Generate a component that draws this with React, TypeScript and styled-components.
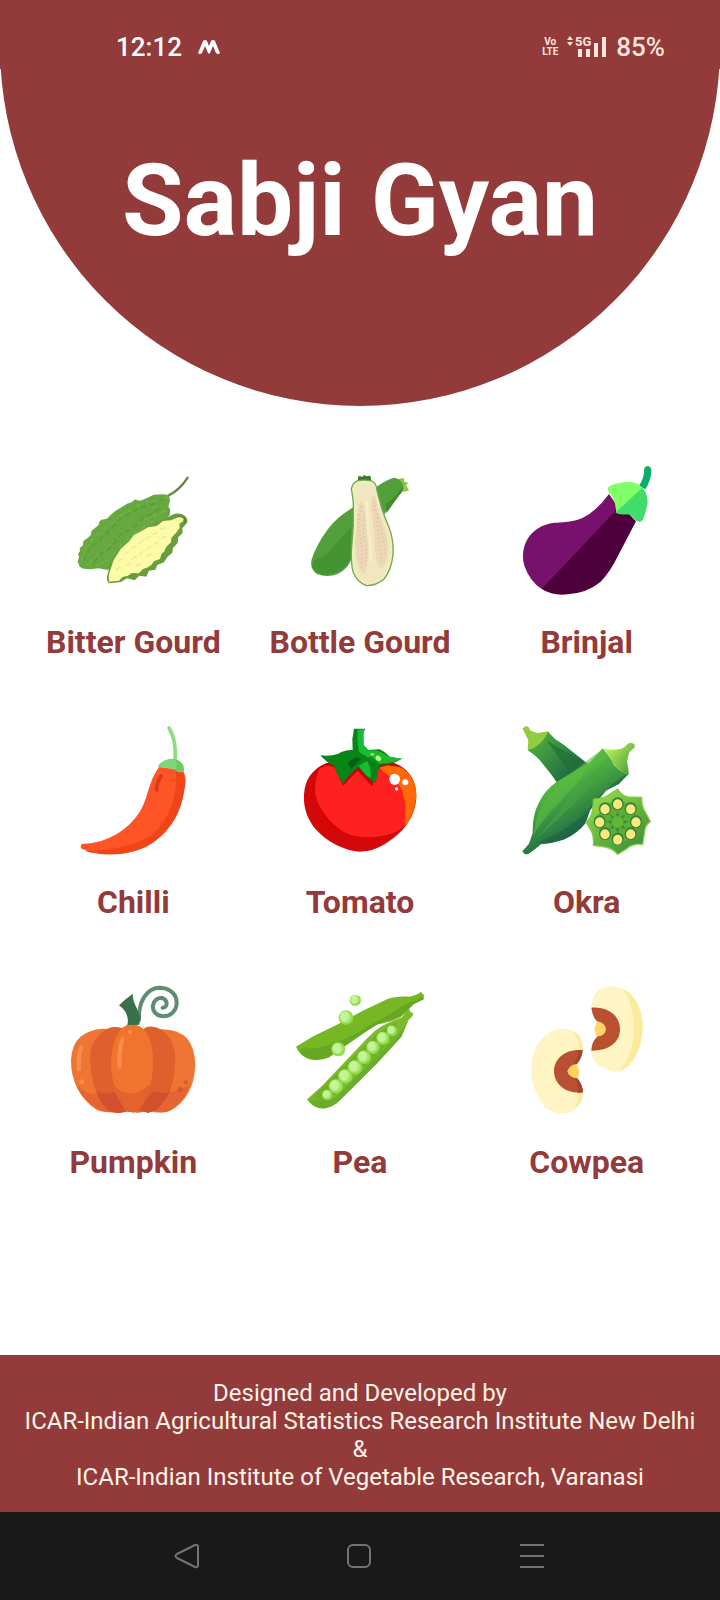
import React from "react";
import styled, { createGlobalStyle } from "styled-components";

const maroon = "#933a3a";
const paleText = "#ffe4de";

const GlobalStyle = createGlobalStyle`
  *, *::before, *::after { box-sizing: border-box; }
  body {
    margin: 0;
    background: #fff;
    font-family: Roboto, "Noto Sans", sans-serif;
  }
`;

const Screen = styled.div`
  display: flex;
  flex-direction: column;
  min-height: 100vh;
  background: #fff;
`;

const Header = styled.header`
  height: calc(50vw + 46px);
  border-radius: 0 0 50vw 50vw;
  background: ${maroon};
`;

const StatusBar = styled.div`
  display: flex;
  align-items: flex-end;
  justify-content: space-between;
  height: 69px;
  padding: 0 55px 7px 116px;
  background: ${maroon};
`;

const StatusGroup = styled.div<{ $gap: number; $color: string }>`
  display: flex;
  align-items: center;
  gap: ${(p) => p.$gap}px;
  color: ${(p) => p.$color};
`;

const StatusText = styled.span`
  font-size: 26px;
  font-weight: 500;
  line-height: 30px;
`;

const Volte = styled.span`
  display: flex;
  flex-direction: column;
  align-items: center;
  font-size: 10px;
  font-weight: 700;
  line-height: 10px;
`;

const Title = styled.h1`
  margin: 72px 0 0;
  color: #fff;
  font-size: 100px;
  font-weight: 700;
  line-height: 120px;
  text-align: center;
`;

const Grid = styled.main`
  display: grid;
  grid-template-columns: repeat(3, 1fr);
  flex: 1;
  align-content: start;
  padding: 60px 20px 0;
`;

const Tile = styled.button`
  display: flex;
  flex-direction: column;
  align-items: center;
  gap: 28px;
  height: 260px;
  padding: 0;
  border: 0;
  background: none;
  color: ${maroon};
  font: 700 32px/40px Roboto, "Noto Sans", sans-serif;
  white-space: nowrap;
  cursor: pointer;
`;

const Picture = styled.svg`
  display: block;
  width: 128px;
  height: 128px;
  overflow: visible;
`;

const Footer = styled.footer`
  padding: 24px 12px 21px;
  background: ${maroon};
  color: #fff3e8;
  font-size: 24px;
  line-height: 28px;
  text-align: center;

  p { margin: 0; }
`;

const NavBar = styled.nav`
  display: grid;
  grid-template-columns: repeat(3, 1fr);
  height: 88px;
  padding: 0 14%;
  background: #191919;
`;

const NavButton = styled.button`
  display: flex;
  align-items: center;
  justify-content: center;
  padding: 0;
  border: 0;
  background: none;
  color: #737373;
  cursor: pointer;
`;

const BitterGourd = () => (
  <Picture viewBox="28 18 384 384" aria-hidden="true">
    <path d="M328 106Q362 88 384 53" fill="none" stroke="#68843b" strokeWidth="7" strokeLinecap="round" />
    <path d="M328 105L310 103 282 104 270 110 248 120 238 122 226 118 216 127 202 131 187 141 170 151 155 163 142 176 126 179 119 184 117 195 103 206 95 214 94 224 83 235 71 243 70 256 60 264 61 273 55 281 58 291 54 305 60 320 71 326 92 328 117 325 144 330 260 250 330 165 332 150 326 138 331 124Z" fill="#67a940" />
    <path d="M325 110L285 125 255 124 222 147 191 161 166 183 145 194 130 216 105 226 90 250 78 266 66 300M320 153L269 170 223 196 198 219 165 239 136 270 111 286 82 316M282 182L225 220 182 259 142 301 112 319" fill="none" stroke="#80b84f" strokeWidth="6" strokeDasharray="12 6 4 8" opacity=".55" />
    <path d="M310 117L271 136 238 143 203 164 176 181 157 205 130 228 114 250 93 260 72 299M302 147L248 176 214 206 178 228 150 264 123 282 98 313" fill="none" stroke="#4f9a35" strokeWidth="7" strokeDasharray="18 9" opacity=".55" />
    <path d="M343 162Q366 157 379 171 386 180 381 190L368 205 369 219 356 231 354 249 340 264 338 278 324 290 313 307 293 315 287 329 268 332 260 350 239 347 225 361 202 355 184 366 151 370Q140 367 142 350L149 320 157 300 178 268 191 254 211 237 231 219 267 196 303 182Z" fill="#6a9d3d" />
    <path d="M364 169Q375 171 370 184L359 191 360 204 347 221 335 233 334 247 320 260 314 274 305 283 301 297 284 303 275 315 262 323 250 327 238 340 217 339 204 347 189 351 178 362 149 365Q144 349 153 327L162 300 183 267 209 243 222 226 244 214 265 202 291 198 310 183 334 181Z" fill="#fcfba8" />
    <path d="M303 207l14-4M280 223l14-5m11 18l13-7M258 237l13-8m13 25l11-9M237 251l13-10m12 27l11-8M214 267l13-10m13 26l12-9M194 284l12-9m11 23l12-8M176 303l13-7m12 20l12-7M263 289l12-8M230 318l12-7M170 328l11-7" stroke="#eceb8b" strokeWidth="4" strokeLinecap="round" />
    <path d="M356 169Q381 170 376 188" fill="none" stroke="#547f33" strokeWidth="4" />
  </Picture>
);

const BottleGourd = () => (
  <Picture viewBox="18 18 384 384" aria-hidden="true">
    <path d="M324 58L341 53 343 65 355 68 348 75 357 91 342 96 328 91Z" fill="#8bc64b" />
    <path d="M312 53Q332 55 339 74 340 95 328 105L286 159 185 294Q176 326 143 342 112 354 81 342 58 327 65 298 79 254 114 207 139 173 185 145L266 76Q290 59 312 53Z" fill="#529f3b" />
    <path d="M75 299Q114 290 134 253 160 224 183 203L184 295Q159 340 105 345 70 339 66 318Z" fill="#459433" />
    <path d="M286 132Q312 119 339 78 341 94 328 105L290 159Z" fill="#438a2e" />
    <path d="M203 62L205 48 218 50 222 45 230 49 241 47 244 62Z" fill="#397b2b" />
    <path d="M203 62Q222 58 246 63 260 71 260 88L271 130Q280 163 295 197 312 237 309 284 304 331 282 357 260 377 229 377 202 366 190 338 183 315 184 274L190 196 190 128Q186 95 184 87 187 69 203 62Z" fill="#eef0b8" stroke="#74a458" strokeWidth="4" />
    <path d="M205 71Q224 65 244 71 253 78 254 93L268 143Q279 177 289 199 303 234 300 280 296 322 276 348 255 366 228 367 207 357 197 334 190 310 193 274L198 199 197 127Q191 100 193 86Z" fill="#f0e6c0" />
    <path d="M212 122Q196 162 199 211 190 264 203 305 210 340 224 342 237 309 234 250L226 154Q222 128 212 122ZM245 108Q239 144 250 192 255 241 255 274 259 310 272 326 292 314 294 277 294 225 275 183 260 149 258 113Z" fill="#ecd8b7" />
    <path d="M214 140Q202 180 210 220T214 320M222 170Q216 210 225 250T224 310M253 125Q260 190 267 230T272 312M262 160Q272 200 280 240T285 290" fill="none" stroke="#d9bc9a" strokeWidth="5" strokeDasharray="4 8" opacity=".7" />
    <path d="M231 123Q230 196 242 245L243 308" fill="none" stroke="#f6ecca" strokeWidth="9" />
  </Picture>
);

const Brinjal = () => (
  <Picture viewBox="38 33 384 384" aria-hidden="true">
    <path d="M296 117Q258 169 215 190 178 204 132 203 78 210 52 251 30 289 42 332 58 378 94 402L235 300 337 176Z" fill="#78106d" />
    <path d="M318 165L94 402Q127 423 172 418 230 414 270 381 300 350 323 302L377 199 345 165Z" fill="#4e003b" />
    <path d="M401 45Q403 33 413 33 424 36 423 47 422 77 405 103L386 92Q402 69 401 45Z" fill="#0aae66" />
    <path d="M292 103Q291 96 300 92 331 79 360 81 382 83 396 98L361 151 317 174Q319 150 306 125 294 111 292 103Z" fill="#80ff68" />
    <path d="M396 98Q411 113 412 141 407 171 398 194 394 201 386 200L376 196Q365 181 352 178 331 181 315 173Z" fill="#41dc6b" />
  </Picture>
);

const Chilli = () => (
  <Picture viewBox="-2 33 384 384" aria-hidden="true">
    <path d="M269 155C246 186 240 214 229 248C215 294 185 330 140 358C100 380 70 386 40 386Q28 390 36 401C90 426 170 424 227 396C290 362 325 310 339 250C350 200 350 184 339 166Z" fill="#ff5426" />
    <path d="M317 158C326 215 310 290 264 344C210 394 120 405 45 408C110 426 190 417 240 389C290 360 325 310 339 250C350 200 350 184 335 164Z" fill="#f04419" />
    <path d="M275 183Q261 200 261 225" fill="none" stroke="#d83a20" strokeWidth="11" strokeLinecap="round" />
    <path d="M298 39Q321 75 316 137" fill="none" stroke="#8bdd80" strokeWidth="11" strokeLinecap="round" />
    <path d="M265 153Q278 134 303 131 329 131 341 150L344 169Q330 176 316 164 290 156 267 158Z" fill="#80d674" />
    <path d="M314 132Q339 137 343 167 330 173 316 163 328 149 314 132Z" fill="#6dca62" />
  </Picture>
);

const Tomato = () => (
  <Picture viewBox="18 33 384 384" aria-hidden="true">
    <path d="M95 151C135 130 180 140 211 142C255 132 300 135 324 149C362 168 379 200 379 243C378 300 345 345 305 373C275 396 245 410 210 410C165 409 110 380 77 343C50 310 40 275 42 239C45 195 65 168 95 151Z" fill="#d40607" />
    <path d="M89 161Q141 136 211 151 289 140 321 158C350 190 360 280 341 336C300 370 210 377 160 350C120 325 84 280 76 238Q72 196 89 161Z" fill="#ff2020" />
    <path d="M265 154Q308 145 336 159C365 178 379 205 379 243Q374 300 343 336C352 290 345 225 318 198Q285 177 265 154Z" fill="#ff6a05" />
    <path d="M103 148L133 157 159 213 203 167 246 214 267 158 291 151 337 157 288 134 141 133Z" fill="#b50d10" />
    <path d="M192 41H225L220 56 221 91 235 105 268 103Q290 112 305 134L337 130Q316 147 269 150L257 204Q227 188 206 156 181 173 159 205 141 182 132 151 113 146 91 121 121 125 145 116 164 104 188 105L187 73Z" fill="#078516" />
    <path d="M203 44L224 42 220 57 220 91Q233 108 255 119L236 128 207 111Q200 79 203 44ZM231 137Q245 160 242 188L229 181 206 153Z" fill="#16bd32" />
    <path d="M237 106Q270 103 291 123L335 131Q308 146 267 146L247 127Z" fill="#20b72d" />
    <path d="M173 142L199 127 213 132 183 163Z" fill="#075f15" />
    <ellipse cx="314" cy="193" rx="16" ry="17" fill="white" />
    <circle cx="346" cy="202" r="9" fill="white" />
    <circle cx="320" cy="222" r="5" fill="white" />
    <ellipse cx="265" cy="130" rx="9" ry="7" fill="#b4ff86" transform="rotate(35 265 130)" />
    <ellipse cx="247" cy="118" rx="6" ry="4" fill="#8eea64" />
    <path d="M112 344l9 9m17 4l17 18m2-8l-14 10" stroke="#a62116" strokeWidth="6" opacity=".6" />
  </Picture>
);

const okraSeeds: [number, number][] = [
  [322, 266], [361, 281], [377, 320], [361, 356],
  [322, 372], [284, 356], [268, 320], [284, 281],
];

const Okra = () => (
  <Picture viewBox="38 33 384 384" aria-hidden="true">
    <defs>
      <linearGradient id="okraBack" x1="80" y1="70" x2="220" y2="200" gradientUnits="userSpaceOnUse">
        <stop stopColor="#4aac3f" /><stop offset="1" stopColor="#155943" />
      </linearGradient>
      <linearGradient id="okraFront" x1="145" y1="205" x2="226" y2="340" gradientUnits="userSpaceOnUse">
        <stop stopColor="#54b93f" /><stop offset="1" stopColor="#1f6a45" />
      </linearGradient>
      <linearGradient id="okraCap" x1="290" y1="105" x2="360" y2="160" gradientUnits="userSpaceOnUse">
        <stop stopColor="#b7ec5b" /><stop offset="1" stopColor="#55a738" />
      </linearGradient>
      <linearGradient id="okraSlice" x1="250" y1="240" x2="390" y2="410" gradientUnits="userSpaceOnUse">
        <stop stopColor="#94dd49" /><stop offset="1" stopColor="#3b8e35" />
      </linearGradient>
    </defs>
    <path d="M37 41Q41 33 53 34L61 47 81 54 116 49 114 65 64 113 52 104 54 76Z" fill="#91cc43" />
    <path d="M113 50L134 72 158 88 233 147 147 213Q125 179 97 146 78 122 52 106 96 92 113 50Z" fill="url(#okraBack)" />
    <path d="M108 75L226 147 182 179Z" fill="#236f3b" opacity=".7" />
    <path d="M277 100Q301 127 312 151 334 175 356 176L326 207 287 227 239 286 226 323Q203 355 160 374 124 385 92 388 70 407 54 417 42 421 36 409L56 386 67 354Q66 299 85 265 102 226 139 200L197 165 239 142Z" fill="url(#okraFront)" />
    <path d="M277 103Q213 147 168 190 101 249 80 305L69 359Q105 303 154 256 217 187 277 103Z" fill="#5cbd42" opacity=".6" />
    <path d="M297 132Q256 202 204 253 151 310 70 378 125 321 160 270 208 205 297 132Z" fill="#41a744" opacity=".6" />
    <path d="M350 176Q303 206 265 246 223 302 180 330 137 362 79 381L106 386Q179 378 226 325L239 286 287 225 325 207Z" fill="#175d46" opacity=".5" />
    <path d="M277 101Q299 106 325 103 340 101 351 88 359 79 373 88L373 97 357 112 350 138 356 177Q330 172 312 149 301 125 277 101Z" fill="url(#okraCap)" />
    <path d="M322 222Q334 242 354 246L394 247Q393 275 407 295L420 320Q404 330 403 350L397 388Q366 385 348 402L322 418Q307 400 286 396L249 391Q252 360 240 343L227 321Q245 305 247 285L250 253Q285 250 299 237Z" fill="url(#okraSlice)" stroke="#86ca48" strokeWidth="4" strokeLinejoin="round" />
    <circle cx="322" cy="320" r="62" fill="#5fad38" />
    {okraSeeds.map(([x, y]) => (
      <g key={`${x}-${y}`}>
        <ellipse cx={x} cy={y} rx="18" ry="19" fill="#2f803a" />
        <ellipse cx={x} cy={y + 2} rx="14" ry="15" fill="#fbe87c" />
      </g>
    ))}
    <path d="M322 288L328 307 346 297 337 314 356 320 337 327 346 344 329 336 322 356 315 336 298 344 307 327 288 320 307 314 298 297 315 307Z" fill="#3d8f38" />
    <circle cx="322" cy="321" r="18" fill="#62b53a" />
  </Picture>
);

const Pumpkin = () => (
  <Picture viewBox="28 33 384 384" aria-hidden="true">
    <path d="M129 161Q91 163 64 184 37 207 34 253 33 305 55 344 77 382 112 405 130 414 154 410L222 404 280 411Q307 416 331 407 366 390 387 352 405 317 407 271 405 217 382 190 357 165 309 163Z" fill="#ef7534" />
    <path d="M51 330Q79 359 111 359L150 355 299 354Q366 351 391 324 371 390 326 409 302 417 277 406L236 413 202 410 176 414 139 411Q91 396 63 356Z" fill="#e56432" />
    <path d="M154 157Q177 153 194 162L183 356 172 413 148 409Q116 376 103 331 90 285 92 236 99 180 154 157Z" fill="#df602d" />
    <path d="M254 159Q278 149 303 163 335 183 345 228 350 273 339 323 324 372 291 404L265 413 237 396Z" fill="#df602d" />
    <path d="M110 348Q136 362 161 352L178 368 198 410 178 414 148 409Q122 383 110 348ZM334 340L323 355 281 350 257 373 239 404 264 414 291 404Q319 376 334 340Z" fill="#d1512c" />
    <path d="M215 147Q245 148 262 176 281 210 280 260 279 319 263 358 249 393 223 407L212 408Q188 386 171 352 154 312 154 260 157 202 178 170 193 149 215 147Z" fill="#f1742e" />
    <path d="M159 326Q211 386 273 325 267 373 235 405L219 413 202 404Q168 374 159 326Z" fill="#e4632c" />
    <path d="M188 192Q176 233 180 274M65 216Q54 247 58 282" fill="none" stroke="#fa8b4c" strokeWidth="13" strokeLinecap="round" />
    <circle cx="66" cy="320" r="7" fill="#fa8b4c" />
    <circle cx="211" cy="172" r="6" fill="#fa8b4c" />
    <circle cx="362" cy="344" r="8" fill="#d65a28" />
    <circle cx="378" cy="322" r="6" fill="#d65a28" />
    <path d="M238 135C236 78 262 38 301 38C333 39 352 60 351 85C349 111 330 125 309 124C289 122 277 107 280 91C283 75 295 67 307 69C320 72 324 85 318 94Q314 99 309 98" fill="none" stroke="#5e8d71" strokeWidth="12" strokeLinecap="round" strokeLinejoin="round" />
    <path d="M178 91Q198 71 219 56 219 77 231 99L242 124 239 149 203 151Q211 115 178 91Z" fill="#3b714a" />
  </Picture>
);

const podPeas: [number, number, number][] = [
  [127, 360, 16], [153, 334, 22], [181, 304, 22], [210, 277, 22],
  [237, 247, 21], [264, 217, 20], [294, 190, 20], [321, 167, 16],
];

const loosePeas: [number, number, number][] = [[160, 223, 21], [183, 128, 22], [211, 76, 17]];

const Pea = () => (
  <Picture viewBox="33 33 384 384" aria-hidden="true">
    <path d="M399 57L409 50 411 55 417 61 416 73 386 88 346 126Q310 145 269 150L232 177 132 247Q107 261 72 253 43 241 33 215L82 185 153 151 232 108 306 73Q331 63 375 65Z" fill="#76b723" />
    <path d="M352 92Q302 129 249 153 205 184 143 208 96 223 49 220 43 228 53 240 83 262 132 247L232 177 286 143 347 126 386 87 416 73 411 66Z" fill="#68a626" />
    <path d="M372 101L377 111 385 115 382 124 369 137 349 185 319 219 274 267 217 324 156 384Q130 403 102 400 78 393 66 373L111 333 248 188Q283 149 351 127L362 109Z" fill="#7dbb2c" />
    <path d="M335 142Q290 163 247 205L83 366 99 379 126 378 265 250 330 183Z" fill="#72b024" />
    <path d="M369 137Q354 160 338 181L258 262 153 365Q119 385 71 373 90 407 128 398 148 393 165 376L274 267 349 185Z" fill="#6cac2b" />
    {[...podPeas, ...loosePeas].map(([x, y, r]) => (
      <g key={`${x}-${y}`}>
        <circle cx={x} cy={y} r={r} fill="#8fdb50" />
        <circle cx={x - 2} cy={y - 2} r={r - 4} fill="#a9e96c" />
        <ellipse cx={x - r / 5} cy={y - r / 6} rx={r * 0.6} ry={r * 0.7} fill="#c6f29a" />
      </g>
    ))}
  </Picture>
);

const Cowpea = () => (
  <Picture viewBox="8 33 384 384" aria-hidden="true">
    <path d="M213 101Q214 64 235 45 252 33 283 34 323 43 349 79 369 116 367 164 361 224 332 264 307 290 284 290 243 285 223 258 211 241 213 223L238 164Z" fill="#fef4c4" />
    <path d="M304 39C345 58 369 105 367 164C364 220 338 275 295 290C355 235 352 90 304 39Z" fill="#fbeb9c" />
    <path d="M230 139Q257 139 258 163 254 186 229 186L222 163Z" fill="#fcd66b" />
    <path d="M213 98C260 94 299 120 299 163C299 205 262 228 213 227Q214 204 226 190L233 184Q251 184 257 165 255 142 230 139 216 126 213 98Z" fill="#b95031" />
    <path d="M187 226Q187 190 168 173 144 157 111 163 67 174 45 220 30 258 33 305 43 357 71 393 96 416 132 417 169 409 184 376 191 361 187 350L160 289Z" fill="#fef4c4" />
    <path d="M155 169Q192 182 187 236L174 227Q178 190 155 169ZM187 345Q190 380 165 403 174 374 171 354Z" fill="#fbeba2" />
    <path d="M169 267Q144 266 141 288 145 312 172 311L177 288Z" fill="#fed35b" />
    <path d="M187 226C140 220 101 248 101 290C103 330 138 357 188 352Q187 329 172 311 146 309 141 289 147 269 169 267 183 253 187 226Z" fill="#b95031" />
    <path d="M187 226L172 226Q174 246 162 266L170 267Q184 254 187 226ZM163 309L172 311Q187 329 188 352L173 354Q174 330 163 309Z" fill="#a44730" />
  </Picture>
);

const vegetables = [
  { name: "Bitter Gourd", Icon: BitterGourd },
  { name: "Bottle Gourd", Icon: BottleGourd },
  { name: "Brinjal", Icon: Brinjal },
  { name: "Chilli", Icon: Chilli },
  { name: "Tomato", Icon: Tomato },
  { name: "Okra", Icon: Okra },
  { name: "Pumpkin", Icon: Pumpkin },
  { name: "Pea", Icon: Pea },
  { name: "Cowpea", Icon: Cowpea },
];

const SignalIcon = () => (
  <svg width="40" height="30" viewBox="0 0 40 30" fill="currentColor" aria-hidden="true">
    <path d="M0 8L3 4 6 8ZM0 10L3 14 6 10Z" />
    <text x="8" y="14" fontSize="13" fontWeight="700" fontFamily="Roboto, sans-serif">5G</text>
    <path d="M11 17h4v8h-4zM19 17h4v8h-4zM27 11h4v14h-4zM35 5h4v20h-4z" />
  </svg>
);

export default function App() {
  return (
    <Screen>
      <GlobalStyle />
      <Header>
        <StatusBar>
          <StatusGroup $gap={16} $color="#fff">
            <StatusText>12:12</StatusText>
            <svg width="22" height="16" viewBox="0 0 22 16" aria-hidden="true">
              <path d="M0 14L5 2Q7 0 9 2L11 7 13 2Q15 0 17 2L22 14Q20 16 18 14L15 7 12 14Q11 15 10 14L7 7 4 14Q2 16 0 14Z" fill="currentColor" />
            </svg>
          </StatusGroup>
          <StatusGroup $gap={9} $color={paleText}>
            <Volte><span>Vo</span><span>LTE</span></Volte>
            <SignalIcon />
            <StatusText>85%</StatusText>
          </StatusGroup>
        </StatusBar>
        <Title>Sabji Gyan</Title>
      </Header>
      <Grid>
        {vegetables.map(({ name, Icon }) => (
          <Tile key={name} type="button">
            <Icon />
            <span>{name}</span>
          </Tile>
        ))}
      </Grid>
      <Footer>
        <p>Designed and Developed by</p>
        <p>ICAR-Indian Agricultural Statistics Research Institute New Delhi</p>
        <p>&amp;</p>
        <p>ICAR-Indian Institute of Vegetable Research, Varanasi</p>
      </Footer>
      <NavBar aria-label="System navigation">
        <NavButton type="button" aria-label="Back">
          <svg width="26" height="26" viewBox="0 0 26 26" fill="none" stroke="currentColor" strokeWidth="2" strokeLinejoin="round">
            <path d="M3 11L21 2Q24 1 24 4V22Q24 25 21 24L3 15Q0 13 3 11Z" />
          </svg>
        </NavButton>
        <NavButton type="button" aria-label="Home">
          <svg width="26" height="26" viewBox="0 0 26 26" fill="none" stroke="currentColor" strokeWidth="2">
            <rect x="1" y="2" width="22" height="22" rx="5" />
          </svg>
        </NavButton>
        <NavButton type="button" aria-label="Recent apps">
          <svg width="26" height="26" viewBox="0 0 26 26" fill="none" stroke="currentColor" strokeWidth="2">
            <path d="M0 2H24M0 13H24M0 24H24" />
          </svg>
        </NavButton>
      </NavBar>
    </Screen>
  );
}
